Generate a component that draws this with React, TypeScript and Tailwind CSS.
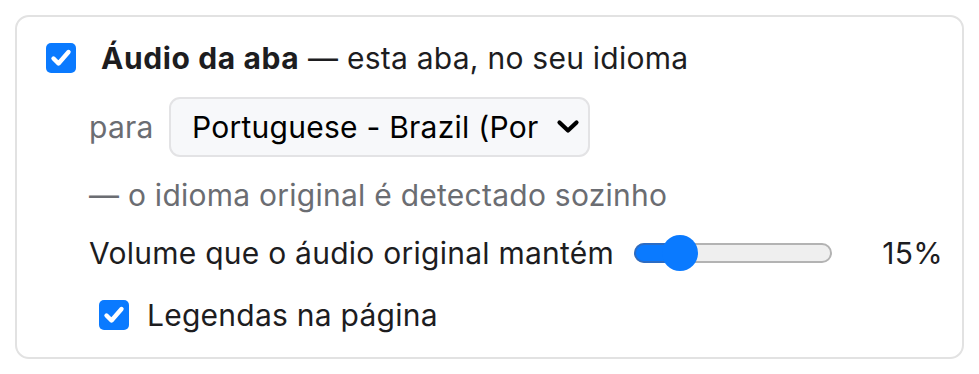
import React from "react";

function Check({ className = "" }: { className?: string }) {
  return (
    <div className={`flex h-[30px] w-[30px] shrink-0 items-center justify-center rounded-[5px] bg-[#0a7aff] ${className}`}>
      <svg width="30" height="30" viewBox="0 0 30 30" fill="none">
        <path d="M7.5 15.5 L12.5 20.5 L22.5 9" stroke="white" strokeWidth="4.4" strokeLinecap="round" strokeLinejoin="round" />
      </svg>
    </div>
  );
}

export default function App() {
  return (
    <div className="bg-white p-[15px] text-[#1d1d1f] tracking-[0.25px]" style={{ fontFamily: "Inter, 'Noto Sans', sans-serif" }}>
      <div className="h-[344px] rounded-[14px] border-2 border-[#e2e2e2] pl-[29px] pr-[19px] pt-[26px]">
        <div className="flex h-[30px] items-center">
          <Check />
          <div className="ml-[25px] whitespace-nowrap text-[30px] leading-[36px]">
            <span className="font-bold tracking-[0.6px]">Áudio da aba</span> — esta aba, no seu idioma
          </div>
        </div>
        <div className="ml-[43px] mt-[24px] flex items-center">
          <span className="w-[80px] text-[30px] leading-[36px] text-[#6b6d72]">para</span>
          <div className="flex h-[60px] w-[421px] items-center justify-between rounded-[11px] border-2 border-[#e3e3e5] bg-[#f7f8fa] pl-[21px] pr-[8px]">
            <span className="whitespace-nowrap text-[30px] leading-[36px] text-black">Portuguese - Brazil (Por</span>
            <svg width="24" height="16" viewBox="0 0 24 16" fill="none">
              <path d="M3.5 3.5 L12 11.5 L20.5 3.5" stroke="black" strokeWidth="4.2" strokeLinecap="round" strokeLinejoin="round" />
            </svg>
          </div>
        </div>
        <div className="ml-[43px] mt-[20px] whitespace-nowrap text-[30px] leading-[36px] text-[#6b6d72]">— o idioma original é detectado sozinho</div>
        <div className="ml-[43px] mt-[22px] flex h-[36px] items-center">
          <span className="w-[526px] shrink-0 whitespace-nowrap text-[30px] leading-[36px]">Volume que o áudio original mantém</span>
          <div className="relative ml-[19px] h-[20px] w-[198px] shrink-0 rounded-full border-2 border-[#b3b3b3] bg-[#efefef]">
            <div className="absolute -left-[2px] -top-[2px] h-[20px] w-[48px] rounded-l-full border-2 border-r-0 border-[#2c6cc4] bg-[#0a7aff]" />
            <div className="absolute left-[26px] top-1/2 h-[36px] w-[36px] -translate-y-1/2 rounded-full bg-[#0a7aff]" />
          </div>
          <span className="ml-auto whitespace-nowrap text-[30px] leading-[36px]">15%</span>
        </div>
        <div className="ml-[53px] mt-[26px] flex h-[36px] items-center">
          <Check />
          <span className="ml-[18px] whitespace-nowrap text-[30px] leading-[36px]">Legendas na página</span>
        </div>
      </div>
    </div>
  );
}
